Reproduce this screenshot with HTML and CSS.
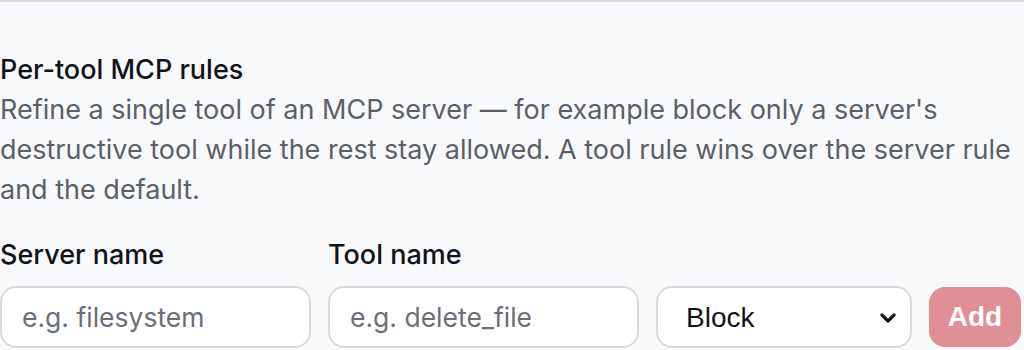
FILE: index.html
```html
<!DOCTYPE html>
<html lang="en">
  <head>
    <meta charset="UTF-8" />
    <title>Per-tool MCP rules</title>
    <link rel="stylesheet" href="styles.css">
  </head>
  <body>
    <section class="rules-section">
      <h3 class="section-title">Per-tool MCP rules</h3>
      <p class="section-help">
        Refine a single tool of an MCP server — for example block only a server's
        destructive tool while the rest stay allowed. A tool rule wins over the server rule
        and the default.
      </p>

      <div class="rule-form">
        <div class="field field-text">
          <label for="serverName">Server name</label>
          <input type="text" id="serverName" class="text-input" placeholder="e.g. filesystem" />
        </div>
        <div class="field field-text">
          <label for="toolName">Tool name</label>
          <input type="text" id="toolName" class="text-input" placeholder="e.g. delete_file" />
        </div>
        <div class="field field-select">
          <div class="select-wrap">
            <select id="ruleAction" class="select-input">
              <option>Block</option>
              <option>Allow</option>
              <option>Ask</option>
            </select>
            <svg class="select-chevron" width="16" height="10" viewBox="0 0 16 10">
              <path d="M2 2 L8 8 L14 2" fill="none" stroke="#111318" stroke-width="3.2" stroke-linecap="round" stroke-linejoin="round" />
            </svg>
          </div>
        </div>
        <div class="field field-btn">
          <button class="add-btn" disabled>Add</button>
        </div>
      </div>
    </section>
  </body>
</html>
```

FILE: styles.css
```css
* {
  margin: 0;
  padding: 0;
  box-sizing: border-box;
}

body {
  font-family: Inter, "Noto Sans", sans-serif;
  background: #f8f9fb;
  color: #111318;
}

.rules-section {
  border-top: 2px solid #dcdde1;
  padding-top: 48px;
}

.section-title {
  font-size: 27px;
  font-weight: 500;
  line-height: 40px;
  color: #111318;
}

.section-help {
  font-size: 27px;
  line-height: 40px;
  color: #5c5f67;
}

.rule-form {
  display: flex;
  align-items: flex-end;
  gap: 17px;
  margin-top: 25px;
}

.field {
  display: flex;
  flex-direction: column;
  gap: 11px;
}

.field label {
  font-size: 27px;
  font-weight: 500;
  line-height: 40px;
  color: #111318;
}

.field-text {
  width: 311px;
}

.field-select {
  width: 256px;
}

.field-btn {
  flex: 1;
}

.text-input,
.select-input {
  width: 100%;
  height: 62px;
  border: 2px solid #d9dadd;
  border-radius: 16px;
  background: #fff;
  font-family: inherit;
  font-size: 26.5px;
  color: #111318;
  padding: 0 20px;
}

.text-input::placeholder {
  color: #6b6e76;
}

.select-wrap {
  position: relative;
}

.select-input {
  appearance: none;
  -webkit-appearance: none;
  font-family: "Liberation Sans", Arial, sans-serif;
  font-size: 28px;
  padding-left: 28px;
}

.select-chevron {
  position: absolute;
  right: 16px;
  top: 27px;
  pointer-events: none;
}

.add-btn {
  height: 60px;
  margin-bottom: 1px;
  width: 92px;
  border: none;
  border-radius: 16px;
  background: #e08f94;
  color: #fff;
  font-family: "Liberation Sans", Arial, sans-serif;
  font-size: 28px;
  font-weight: bold;
}
```
